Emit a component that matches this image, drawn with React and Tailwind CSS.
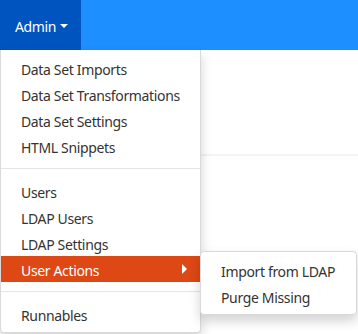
import React from "react";

const font = { fontFamily: '"Noto Sans", "Open Sans", sans-serif', letterSpacing: "-0.35px" };

function Item({ children, active, arrow }) {
  return (
    <div
      className={`flex items-center justify-between h-[26px] pt-[3px] pl-5 pr-3 text-[14px] leading-5 whitespace-nowrap ${
        active ? "bg-[#dd4814] text-white" : "text-[#333333]"
      }`}
    >
      <span>{children}</span>
      {arrow && (
        <span className="w-0 h-0 -mt-[3px] border-y-[5px] border-y-transparent border-l-[5px] border-l-white mr-[1px]" />
      )}
    </div>
  );
}

function Divider() {
  return <div className="h-px my-[9px] bg-[#e5e5e5]" />;
}

export default function App() {
  return (
    <div className="w-[358px] h-[334px] bg-white relative overflow-hidden" style={font}>
      <div className="h-[50px] bg-[#1e8fff] flex">
        <div className="w-[81px] bg-[#0054bf] flex items-center pt-[2px] pl-[15px] text-white text-[14px]">
          <span>Admin</span>
          <span className="ml-[4px] -mt-[1px] w-0 h-0 border-x-[4px] border-x-transparent border-t-[4px] border-t-white" />
        </div>
      </div>
      <div className="h-[104px]" />
      <div className="h-[2px] bg-[#f4f4f4]" />

      <div className="absolute left-0 top-[50px] w-[201px] bg-white border border-[#d9d9d9] border-t-0 rounded-b-[4px] py-[5px] shadow-[0_6px_12px_rgba(0,0,0,0.175)]">
        <Item>Data Set Imports</Item>
        <Item>Data Set Transformations</Item>
        <Item>Data Set Settings</Item>
        <Item>HTML Snippets</Item>
        <Divider />
        <Item>Users</Item>
        <Item>LDAP Users</Item>
        <Item>LDAP Settings</Item>
        <Item active arrow>User Actions</Item>
        <Divider />
        <Item>Runnables</Item>
      </div>

      <div className="absolute left-[200px] top-[251px] w-[157px] bg-white border border-[#d9d9d9] rounded-[4px] py-[5px] shadow-[0_6px_12px_rgba(0,0,0,0.175)]">
        <Item>Import from LDAP</Item>
        <Item>Purge Missing</Item>
      </div>
    </div>
  );
}
